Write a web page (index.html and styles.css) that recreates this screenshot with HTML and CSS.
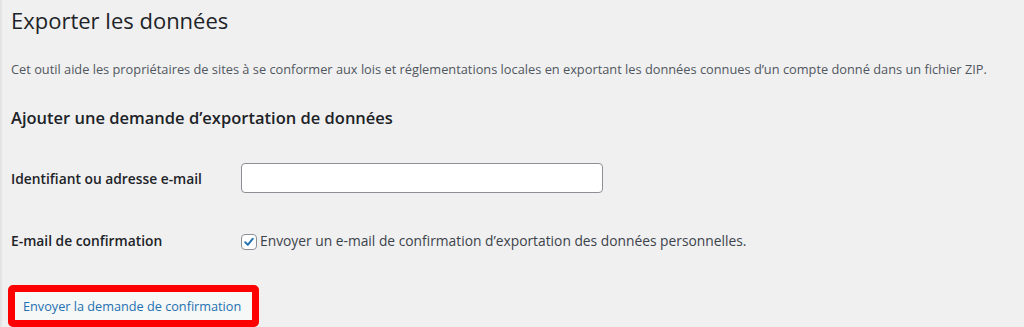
FILE: index.html
```html
<!DOCTYPE html>
<html lang="fr">
<head>
<meta charset="utf-8">
<title>Exporter les données</title>
<link rel="stylesheet" href="styles.css">
</head>
<body>
<div class="wrap">
  <h1 class="title">Exporter les données</h1>
  <p class="intro">Cet outil aide les propriétaires de sites à se conformer aux lois et réglementations locales en exportant les données connues d’un compte donné dans un fichier ZIP.</p>
  <h2 class="subtitle">Ajouter une demande d’exportation de données</h2>
  <div class="form-table">
    <div class="row row-input">
      <label class="label" for="user">Identifiant ou adresse e-mail</label>
      <input class="text-input" id="user" type="text">
    </div>
    <div class="row row-check">
      <span class="label">E-mail de confirmation</span>
      <label class="check-label">
        <span class="checkbox">
          <svg viewBox="0 0 16 16" width="16" height="16"><path d="M3.6 8.2 L6.6 11.2 L12.4 4.2" fill="none" stroke="#2271b1" stroke-width="2.2" stroke-linecap="round" stroke-linejoin="round"/></svg>
        </span>
        Envoyer un e-mail de confirmation d’exportation des données personnelles.
      </label>
    </div>
  </div>
  <div class="submit">
    <span class="highlight"><button class="button" type="button">Envoyer la demande de confirmation</button></span>
  </div>
</div>
</body>
</html>
```
FILE: styles.css
```css
html, body {
  margin: 0;
  padding: 0;
  background: #f0f0f1;
}
body {
  font-family: "Open Sans", "Noto Sans", sans-serif;
  color: #3c434a;
  font-size: 13px;
  height: 327px;
  overflow: hidden;
  border-left: 2px solid #e4e4e5;
  box-sizing: border-box;
}
.wrap {
  padding: 0 0 0 9px;
}
.title {
  margin: 0;
  padding-top: 5px;
  font-size: 22px;
  font-stretch: 89%;
  font-weight: 400;
  line-height: 30px;
  color: #1d2327;
}
.intro {
  margin: 24px 0 0;
  font-size: 12.8px;
  line-height: 20px;
  color: #50575e;
}
.subtitle {
  margin: 28px 0 0;
  font-size: 16.5px;
  font-weight: 600;
  line-height: 22px;
  color: #1d2327;
}
.form-table {
  margin-top: 34px;
}
.row {
  display: grid;
  grid-template-columns: 230px 1fr;
  align-items: center;
}
.row-check {
  margin-top: 38px;
}
.label {
  font-size: 13.8px;
  font-weight: 600;
  color: #1d2327;
}
.text-input {
  width: 362px;
  height: 30px;
  box-sizing: border-box;
  border: 1px solid #8c8f94;
  border-radius: 4px;
  background: #fff;
  margin: 0;
}
.check-label {
  display: flex;
  align-items: center;
  gap: 3px;
  font-size: 13.8px;
  color: #3c434a;
}
.checkbox {
  width: 16px;
  height: 16px;
  box-sizing: border-box;
  border: 1px solid #8c8f94;
  border-radius: 4px;
  background: #fff;
  display: inline-flex;
  align-items: center;
  justify-content: center;
  margin-top: 2px;
}
.checkbox svg {
  display: block;
  width: 14px;
  height: 14px;
}
.submit {
  margin-top: 35px;
}
.highlight {
  display: inline-block;
  margin-left: -3px;
  border: 7px solid #ff0000;
  border-radius: 5px;
}
.button {
  display: block;
  height: 28px;
  width: 237px;
  padding: 0 8px;
  margin: 0;
  border: 0;
  background: #f6f7f7;
  color: #2271b1;
  font-family: "Open Sans", "Noto Sans", sans-serif;
  font-size: 12.7px;
  line-height: 28px;
  text-align: left;
}
```
